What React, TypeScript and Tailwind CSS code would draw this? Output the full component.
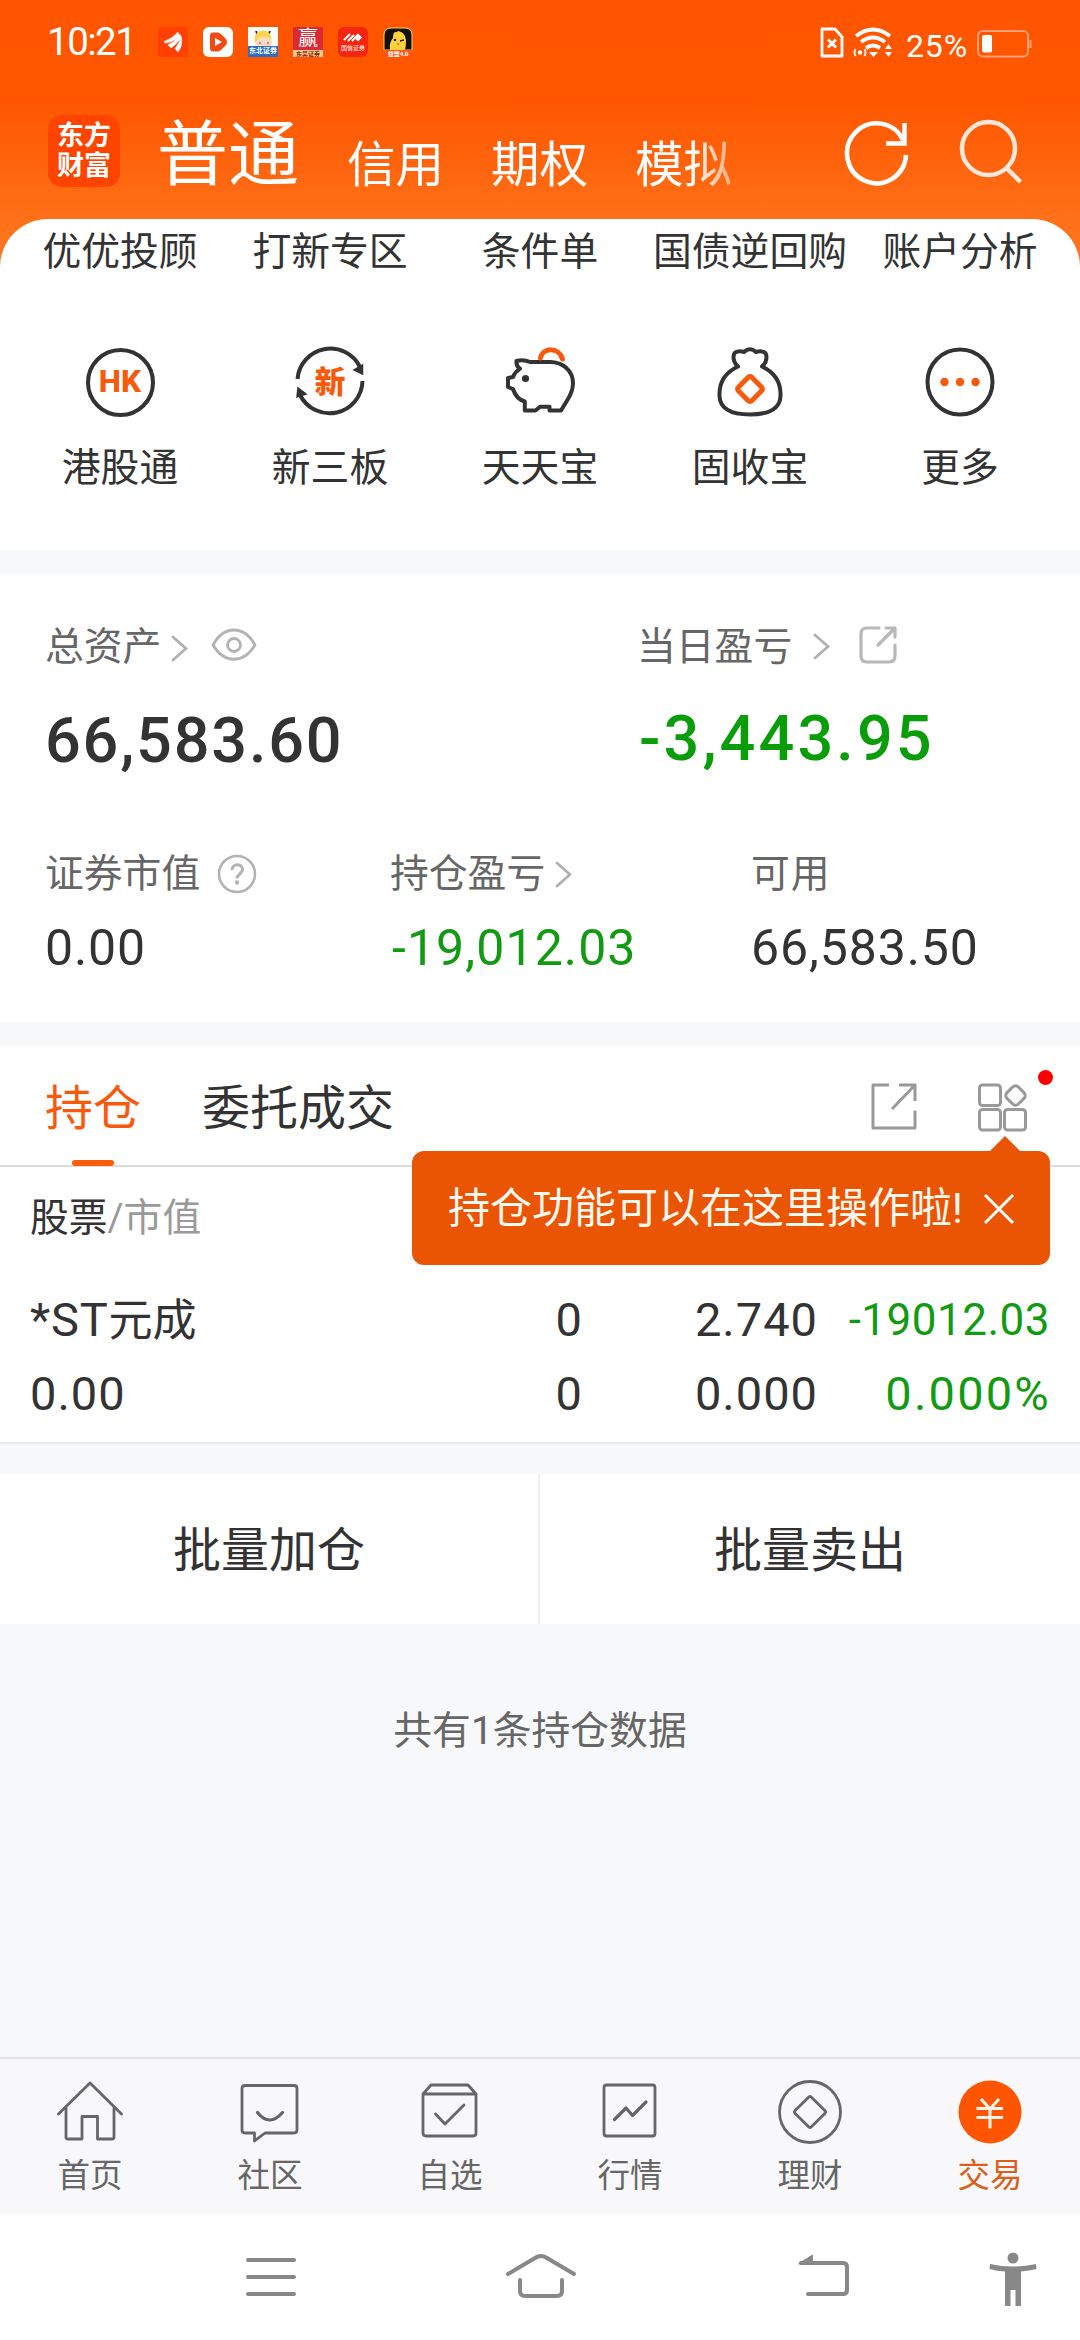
import React from "react";

type Kids = { children: React.ReactNode };

function StatusBar() {
  return (
    <div className="flex h-[84px] items-center pl-[47px] pr-[48px] text-white">
      <span className="w-[111px] text-[38.500px] leading-[84px] tracking-[-1.500px]">10:21</span>
      <div className="flex items-center gap-[15px]">
        <svg width="30" height="30" viewBox="0 0 30 30">
          <rect width="30" height="30" rx="3" fill="#ff4000" />
          <path d="M6 14.500Q14 12 20 5l1 4Q14 16 7 16zM10 18q7-3 12-11l.8 4Q18 18 13 21zM17 21.500Q22 16 23 9q2.500 9-3 16z" fill="#fff" stroke="#fff" strokeWidth=".6" />
        </svg>
        <svg width="30" height="30" viewBox="0 0 30 30">
          <rect width="30" height="30" rx="6" fill="#fff" />
          <path d="M7 9q0-4 4-3.500h4q2 .5 4 2.500l4 4q2 3 0 6l-4 4q-2 2-4 2.500h-4Q7 25 7 21z" fill="#f04a12" />
          <path d="M12 11l7 4-7 4z" fill="#fff" />
        </svg>
        <div className="relative flex h-[30px] w-[30px] flex-col overflow-hidden bg-white">
          <svg width="30" height="19" viewBox="0 0 30 19">
            <path d="M8 4l2 5M22 4l-2 5" stroke="#333" strokeWidth="2" />
            <circle cx="15" cy="12" r="8.500" fill="#fbd34d" />
            <ellipse cx="16" cy="15.500" rx="8" ry="6" fill="#fbd9c0" />
            <path d="M12 15v2M20 15v2" stroke="#7a4a2a" />
          </svg>
          <span className="h-[11px] bg-[#2b6fc4] text-center text-[7px] font-bold leading-[11px] text-white">东北证券</span>
        </div>
        <div className="flex h-[30px] w-[30px] flex-col items-center overflow-hidden bg-[#d92a35]">
          <span className="h-[23px] text-[20px] leading-[23px] text-white">赢</span>
          <span className="h-[7px] w-full bg-[#f6c98f] text-center text-[6px] font-bold leading-[7px] text-[#8a2a10]">东吴证券</span>
        </div>
        <div className="flex h-[30px] w-[30px] flex-col items-center overflow-hidden rounded-[6px] bg-[#f5260f]">
          <svg className="mt-[2px]" width="20" height="14" viewBox="0 0 20 14">
            <path d="M1 11l6-6M5 12l6-6M9 12l6-6" stroke="#fff" strokeWidth="2" />
            <path d="M15 4.500l4 4-4 4-4-4z" fill="#fff" />
          </svg>
          <span className="text-[6px] leading-[9px] text-white">国信证券</span>
        </div>
        <div className="flex h-[30px] w-[30px] flex-col items-center overflow-hidden rounded-[7px] bg-[#ff5a1c]">
          <svg width="30" height="23" viewBox="0 0 30 23">
            <path d="M1 23V8q0-7 7-7h14q7 0 7 7v15z" fill="#111" stroke="#ffd23c" />
            <path d="M7 23q-1-8 3-12 0-6 2.500-6T15 4q7 1 8 9 0 6-1 10z" fill="#ffd23c" />
            <circle cx="12" cy="13" r="1.300" fill="#222" />
            <path d="M17 14l4-1" stroke="#222" strokeWidth="1.500" />
            <path d="M13.500 16l3 .5-1.500 2.500z" fill="#f26a1b" />
          </svg>
          <span className="text-[6px] font-bold leading-[7px] text-white">益盟4.0</span>
        </div>
      </div>
      <div className="ml-auto flex items-center">
        <svg width="24" height="31" viewBox="0 0 24 31" fill="none" stroke="#fff" strokeWidth="2.800">
          <path d="M2 2h13l7 8v19H2z" strokeLinejoin="round" />
          <path d="M8 12.500l8 8M16 12.500l-8 8" strokeWidth="3" />
        </svg>
        <svg className="ml-[9px]" width="40" height="31" viewBox="0 0 40 31" fill="none" stroke="#fff">
          <path d="M3 9q17-13 34 0M8 15q12-9 24 0M13 21q7-5 14 0" strokeWidth="4" />
          <path d="M16 25h9l-4.500 5z" fill="#fff" stroke="none" />
          <circle cx="7" cy="25.500" r="2.200" fill="#fff" stroke="none" />
          <path d="M2.500 22q-2 3.500 0 7M11.500 22q2 3.500 0 7" strokeWidth="1.800" />
          <path d="M32 22l3.500-5 3.500 5zM32 25l3.500 5 3.500-5z" fill="#fff" stroke="none" />
        </svg>
        <span className="ml-[13px] mt-[7px] text-[32px] leading-[40px] tracking-[0.900px]">25%</span>
        <svg className="ml-[9px] mt-[3px]" width="55" height="28" viewBox="0 0 55 28" fill="none">
          <rect x="1" y="1" width="50" height="25.500" rx="5" stroke="#ffa27a" strokeWidth="2" />
          <path d="M53.500 10v8" stroke="#ffa27a" strokeWidth="2" />
          <rect x="5" y="5" width="10" height="17.500" rx="2" fill="#fff" />
        </svg>
      </div>
    </div>
  );
}

function TopBar() {
  return (
    <div className="flex h-[135px] items-start pl-[48px] pr-[56px] pt-[31px] text-white">
      <div className="flex h-[72px] w-[72px] flex-col items-center justify-center rounded-[14px] bg-[#ff4400] text-[27px] font-bold leading-[30px]">
        <span>东方</span>
        <span>财富</span>
      </div>
      <span className="ml-[37px] text-[71px] font-normal leading-[80px]">普通</span>
      <div className="ml-[48px] mt-[23px] flex w-[390px] gap-[47px] text-[48.500px] leading-[56px] [mask-image:linear-gradient(to_right,#000_345px,rgba(0,0,0,0.45)_385px)]">
        <span>信用</span>
        <span>期权</span>
        <span>模拟</span>
      </div>
      <svg className="ml-auto mt-[4px]" width="66" height="68" viewBox="0 0 66 68" fill="none" stroke="#fff" strokeWidth="4.500">
        <path d="M62 36A29.500 30 0 1 1 59 21" />
        <path d="M60.500 4v20.500H42" />
      </svg>
      <svg className="ml-[48px] mt-[4px] opacity-85" width="66" height="68" viewBox="0 0 66 68" fill="none" stroke="#fff" strokeWidth="4.500">
        <circle cx="30.500" cy="29.500" r="26.500" />
        <path d="M48.500 49l14 14" />
      </svg>
    </div>
  );
}

const iconSvg = { width: 76, height: 76, viewBox: "0 0 76 76", fill: "none", stroke: "#333", strokeWidth: 4 } as const;

function HkIcon() {
  return (
    <div className="flex h-[69px] w-[69px] items-center justify-center rounded-full border-4 border-[#333] text-[31.500px] font-extrabold leading-none text-[#f75a0c]">
      HK
    </div>
  );
}

function ThirdBoardIcon() {
  return (
    <div className="relative flex h-[76px] w-[76px] items-center justify-center text-[31px] font-black leading-none text-[#f75a0c]">
      <svg {...iconSvg} className="absolute inset-0">
        <path d="M5.500 35A33 33 0 0 1 68 23" />
        <path d="M70.500 37A33 33 0 0 1 8 51" />
        <path d="M62 26l8.500-5v9zM5 53l1-9 8 6z" fill="#333" strokeWidth="1.500" />
      </svg>
      新
    </div>
  );
}

function PigIcon() {
  return (
    <svg {...iconSvg} strokeLinejoin="round">
      <path d="M14.500 17q7-2 13.500 1h20c13 0 23 9 23 21 0 6-2 11-5 16l-7 11.500H47.500v-3.700H38l-4.500 3.700H22.800v-9C17 56 13 51 11 45L6 43V34l5-1q2-5 7-8.300-4-2.700-3.500-7.700z" />
      <circle cx="23.500" cy="34.500" r="3.600" fill="#333" stroke="none" />
      <path d="M38.500 14C41 3 57 3 60.500 15" stroke="#f75a0c" strokeWidth="5" strokeLinecap="round" />
    </svg>
  );
}

function BagIcon() {
  return (
    <svg {...iconSvg} strokeLinejoin="round">
      <path d="M26 22.500C20 17 20 8 26 7.500q3-.5 6 .5 6-5.500 12 0 3-1 6-.5c6 .5 6 9.500 0 15C64 29 69 40 68.500 52 68 65 56 70.500 38 70.500S8 65 7.500 52C7 40 12 29 26 22.500z" />
      <rect x="28.500" y="35.500" width="19" height="19" rx="2.500" transform="rotate(45 38 45)" stroke="#f75a0c" strokeWidth="5" />
    </svg>
  );
}

function MoreIcon() {
  return (
    <svg {...iconSvg}>
      <circle cx="38" cy="38" r="32.500" />
      <g fill="#f75a0c" stroke="none">
        <circle cx="22.500" cy="38" r="4.200" />
        <circle cx="38" cy="38" r="4.200" />
        <circle cx="53.500" cy="38" r="4.200" />
      </g>
    </svg>
  );
}

const topServices = ["优优投顾", "打新专区", "条件单", "国债逆回购", "账户分析"];
const services = [
  { label: "港股通", icon: <HkIcon /> },
  { label: "新三板", icon: <ThirdBoardIcon /> },
  { label: "天天宝", icon: <PigIcon /> },
  { label: "固收宝", icon: <BagIcon /> },
  { label: "更多", icon: <MoreIcon /> },
];

function Services() {
  return (
    <section className="h-[331px] rounded-t-[48px] bg-white px-[15px] pt-[7px] text-[38.800px] text-[#333]">
      <div className="grid grid-cols-5">
        {topServices.map((t) => (
          <span key={t} className="-mx-4 whitespace-nowrap text-center leading-[52px]">{t}</span>
        ))}
      </div>
      <div className="mt-[66px] grid grid-cols-5">
        {services.map((s) => (
          <div key={s.label} className="flex flex-col items-center">
            <div className="flex h-[76px] items-center">{s.icon}</div>
            <span className="mt-[22px] leading-[52px]">{s.label}</span>
          </div>
        ))}
      </div>
    </section>
  );
}

function Chevron({ className }: { className: string }) {
  return (
    <svg className={className} width="17" height="27" viewBox="0 0 17 27" fill="none" stroke="#b0b0b0" strokeWidth="2.800" strokeLinecap="round">
      <path d="M2 2l13 11.500L2 25" />
    </svg>
  );
}

function Label({ children }: Kids) {
  return <div className="flex h-[52px] items-center text-[38.800px] leading-[52px] text-[#666]">{children}</div>;
}

function Assets() {
  return (
    <section className="h-[448px] bg-white pl-[45px] pt-[47px] text-[#333]">
      <div className="flex">
        <div className="w-[592px]">
          <Label>
            总资产
            <Chevron className="ml-[10px] mt-[2px]" />
            <svg className="ml-[23px] -mt-[4px]" width="46" height="34" viewBox="0 0 46 34" fill="none" stroke="#b3b3b3" strokeWidth="2.800">
              <path d="M2 17C13-3 33-3 44 17 33 36 13 36 2 17z" strokeLinejoin="round" />
              <circle cx="23" cy="17" r="6.500" />
            </svg>
          </Label>
          <div className="mt-[30px] text-[63px] font-medium leading-[76px] tracking-[1.800px]">66,583.60</div>
        </div>
        <div>
          <Label>
            当日盈亏
            <Chevron className="ml-[21px] -mt-[2px]" />
            <svg className="ml-[29px] -mt-[4px]" width="38" height="38" viewBox="0 0 38 38" fill="none" stroke="#b8b8b8" strokeWidth="3.200" strokeLinecap="round" strokeLinejoin="round">
              <path d="M20 2H8Q2 2 2 8v22q0 6 6 6h22q6 0 6-6V19" />
              <path d="M27 2h9v9M35 3L19 19" />
            </svg>
          </Label>
          <div className="mt-[28px] pl-[2px] text-[63px] font-medium leading-[76px] tracking-[3.100px] text-[#0a9d0a]">-3,443.95</div>
        </div>
      </div>
      <div className="mt-[69px] flex text-[50px] leading-[60px] tracking-[0.900px]">
        <div className="w-[345px]">
          <Label>
            <span className="tracking-normal">证券市值</span>
            <svg className="ml-[17px]" width="40" height="40" viewBox="0 0 40 40" fill="none" stroke="#b3b3b3" strokeWidth="2.600">
              <circle cx="20" cy="20" r="18" />
              <path d="M15 16c0-7 10.500-7 10.500-.5 0 4.500-5.500 4.500-5.500 9" strokeWidth="3" />
              <circle cx="20" cy="28.500" r="2.200" fill="#b3b3b3" stroke="none" />
            </svg>
          </Label>
          <div className="mt-[18px]">0.00</div>
        </div>
        <div className="w-[361px]">
          <Label>
            <span className="tracking-normal">持仓盈亏</span>
            <Chevron className="ml-[10px]" />
          </Label>
          <div className="mt-[18px] pl-[2px] tracking-[1.100px] text-[#129a12]">-19,012.03</div>
        </div>
        <div>
          <Label>可用</Label>
          <div className="mt-[18px]">66,583.50</div>
        </div>
      </div>
    </section>
  );
}

function Tooltip() {
  return (
    <div className="absolute left-[412px] top-[105px] flex h-[114px] w-[638px] items-center rounded-[12px] bg-[#ea5504] pl-[36px] text-[42px] leading-[56px] text-[#fff8f0]">
      <svg className="absolute left-[577px] top-[-15px]" width="32" height="16" viewBox="0 0 32 16">
        <path d="M0 16L16 0l16 16z" fill="#ea5504" />
      </svg>
      <span className="mt-[1px] whitespace-nowrap">持仓功能可以在这里操作啦!</span>
      <svg className="absolute left-[571px] top-[42px]" width="32" height="32" viewBox="0 0 32 32" fill="none" stroke="#fff" strokeWidth="3">
        <path d="M2 2l28 28M30 2L2 30" />
      </svg>
    </div>
  );
}

function Holdings() {
  return (
    <section className="relative h-[398px] border-b-2 border-[#ececee] bg-white text-[#333]">
      <div className="flex h-[121px] items-start border-b-2 border-[#dcdcdc] pl-[45px] pr-[52px] text-[48px] leading-[60px]">
        <div className="flex h-[120px] flex-col items-center pt-[33px] text-[#f75a0c]">
          持仓
          <span className="mt-auto h-[6px] w-[42px] rounded-full bg-[#fa5a0a]" />
        </div>
        <span className="ml-[61px] pt-[33px]">委托成交</span>
        <svg className="ml-auto mt-[37px]" width="46" height="47" viewBox="0 0 46 47" fill="none" stroke="#999" strokeWidth="3" strokeLinejoin="round">
          <path d="M18 2H2v43h42V27.500" />
          <path d="M28 2h16v16M43 3L21 26" strokeLinejoin="miter" />
        </svg>
        <svg className="ml-[61px] mt-[37px]" width="50" height="49" viewBox="0 0 50 49" fill="none" stroke="#999" strokeWidth="3">
          <rect x="1.500" y="2" width="21" height="20.500" rx="3" />
          <rect x="1.500" y="26.500" width="21" height="20.500" rx="3" />
          <rect x="26.500" y="26.500" width="21" height="20.500" rx="3" />
          <rect x="29.500" y="4.500" width="16" height="16" rx="4" transform="rotate(45 37.500 12.500)" />
        </svg>
      </div>
      <span className="absolute left-[1038px] top-[24px] h-[15px] w-[15px] rounded-full bg-[#fa0000]" />
      <div className="px-[30px]">
        <div className="mt-[25px] text-[38.800px] leading-[52px]">
          股票<span className="text-[#999]">/市值</span>
        </div>
        <div className="mt-[46px] grid grid-cols-[322px_231px_235px_1fr] text-right text-[47px] leading-[60px] tracking-[1px]">
          <span className="text-left text-[44px] tracking-normal">
            <span className="text-[47px] tracking-[0.800px]">*ST</span>元成
          </span>
          <span>0</span>
          <span>2.740</span>
          <span className="-ml-6 text-[44px] tracking-[0.500px] text-[#129a12]">-19012.03</span>
        </div>
        <div className="mt-[13px] grid grid-cols-[322px_231px_235px_1fr] text-right text-[47px] leading-[60px] tracking-[1px]">
          <span className="text-left">0.00</span>
          <span>0</span>
          <span>0.000</span>
          <span className="-mr-[1px] tracking-[2.200px] text-[#129a12]">0.000%</span>
        </div>
      </div>
      <Tooltip />
    </section>
  );
}

const navSvg = { width: 72, height: 72, viewBox: "0 0 72 72", fill: "none", stroke: "#666", strokeWidth: 2.8, strokeLinejoin: "round", strokeLinecap: "round" } as const;

const navItems = [
  {
    label: "首页",
    icon: (
      <svg {...navSvg}>
        <path d="M4.500 38L36 7l31.500 31M12 31.500V61q0 2 2 2h14V40.500h15.500V63H58q2 0 2-2V31.500" />
      </svg>
    ),
  },
  {
    label: "社区",
    icon: (
      <svg {...navSvg}>
        <path d="M11 9.500h49q3 0 3 3V54q0 3-3 3H31L20.500 65v-8H11q-3 0-3-3V12.500q0-3 3-3z" />
        <path d="M23.500 36.500q12 15 25 0" strokeWidth="3.200" />
      </svg>
    ),
  },
  {
    label: "自选",
    icon: (
      <svg {...navSvg}>
        <path d="M9 18h53v39q0 3-3 3H12q-3 0-3-3zl8-9h37l8 9M21.500 38l9.500 10 19-19" />
      </svg>
    ),
  },
  {
    label: "行情",
    icon: (
      <svg {...navSvg}>
        <rect x="10" y="9" width="51" height="51" rx="2.500" />
        <path d="M20.500 43.500L32 32l6.500 7.500L52 26" strokeWidth="3.200" />
      </svg>
    ),
  },
  {
    label: "理财",
    icon: (
      <svg {...navSvg}>
        <circle cx="36" cy="36" r="30.500" />
        <rect x="24.500" y="24.500" width="23" height="23" rx="2" transform="rotate(45 36 36)" />
      </svg>
    ),
  },
  {
    label: "交易",
    active: true,
    icon: (
      <svg {...navSvg}>
        <circle cx="36" cy="36" r="31.500" fill="#ff5500" stroke="none" />
        <path d="M27 23l9 10 9-10M36 33v19.500M22.500 32.500h26.500M22.500 41.500h26.500" stroke="#fff3ea" strokeWidth="3" strokeLinecap="butt" />
      </svg>
    ),
  },
];

function BottomNav() {
  return (
    <nav className="grid h-[157px] grid-cols-6 border-t-2 border-[#e2e2e4] bg-[#f8f8fa]">
      {navItems.map((n) => (
        <div key={n.label} className="flex flex-col items-center pt-[17px]">
          {n.icon}
          <span className={n.active ? "mt-[8px] text-[32.500px] leading-[40px] text-[#d9601a]" : "mt-[8px] text-[32.500px] leading-[40px] text-[#666]"}>{n.label}</span>
        </div>
      ))}
    </nav>
  );
}

function SystemNav() {
  return (
    <div className="flex h-[126px] items-center bg-white pl-[244px] pr-[43px] pt-[3px]">
      <svg width="54" height="54" viewBox="0 0 54 54" stroke="#888" strokeWidth="4" strokeLinecap="round">
        <path d="M4 8h46M4 25h46M4 42h46" />
      </svg>
      <svg className="ml-[206px]" width="74" height="54" viewBox="0 0 74 54" fill="none" stroke="#888" strokeWidth="4" strokeLinecap="round">
        <path d="M4 22L31 6q6-4 12 0l27 16M16 28v11q0 5 5 5h32q5 0 5-5V28" />
      </svg>
      <svg className="ml-[219px]" width="54" height="54" viewBox="0 0 54 54" fill="none" stroke="#888" strokeWidth="4" strokeLinecap="round">
        <path d="M4 11h42q4 0 4 4v23q0 4-4 4H11" />
        <path d="M2 11.500L15.500 3v9z" fill="#888" strokeWidth="1" />
      </svg>
      <svg className="ml-auto" width="48" height="56" viewBox="0 0 48 56" fill="#888">
        <circle cx="24" cy="7" r="5.500" />
        <path d="M1 13q23 5 46 0l.5 5q-7 1.500-15.500 2.500V55h-5.500V39h-5V55H16V20.500Q8 20 .5 18z" />
      </svg>
    </div>
  );
}

export default function App() {
  return (
    <div className="flex h-[2340px] w-[1080px] flex-col overflow-hidden bg-[#f7f8fa] font-['Roboto','Noto_Sans_CJK_SC',sans-serif]" lang="zh-CN">
      <div className="bg-[linear-gradient(#ff5500_0px,#ff5600_100px,#ff7018_219px,#ff7820_270px,#fff_271px)]">
        <StatusBar />
        <TopBar />
        <Services />
      </div>
      <div className="h-[24px]" />
      <Assets />
      <div className="h-[24px]" />
      <Holdings />
      <div className="mt-[30px] grid h-[150px] grid-cols-2 bg-white text-center text-[48px] leading-[154px] text-[#333]">
        <span className="h-[150px] border-r-2 border-[#f0f0f2]">批量加仓</span>
        <span>批量卖出</span>
      </div>
      <div className="mt-[81px] text-center text-[38.800px] leading-[52px] text-[#666]">共有1条持仓数据</div>
      <div className="mt-auto">
        <BottomNav />
        <SystemNav />
      </div>
    </div>
  );
}
